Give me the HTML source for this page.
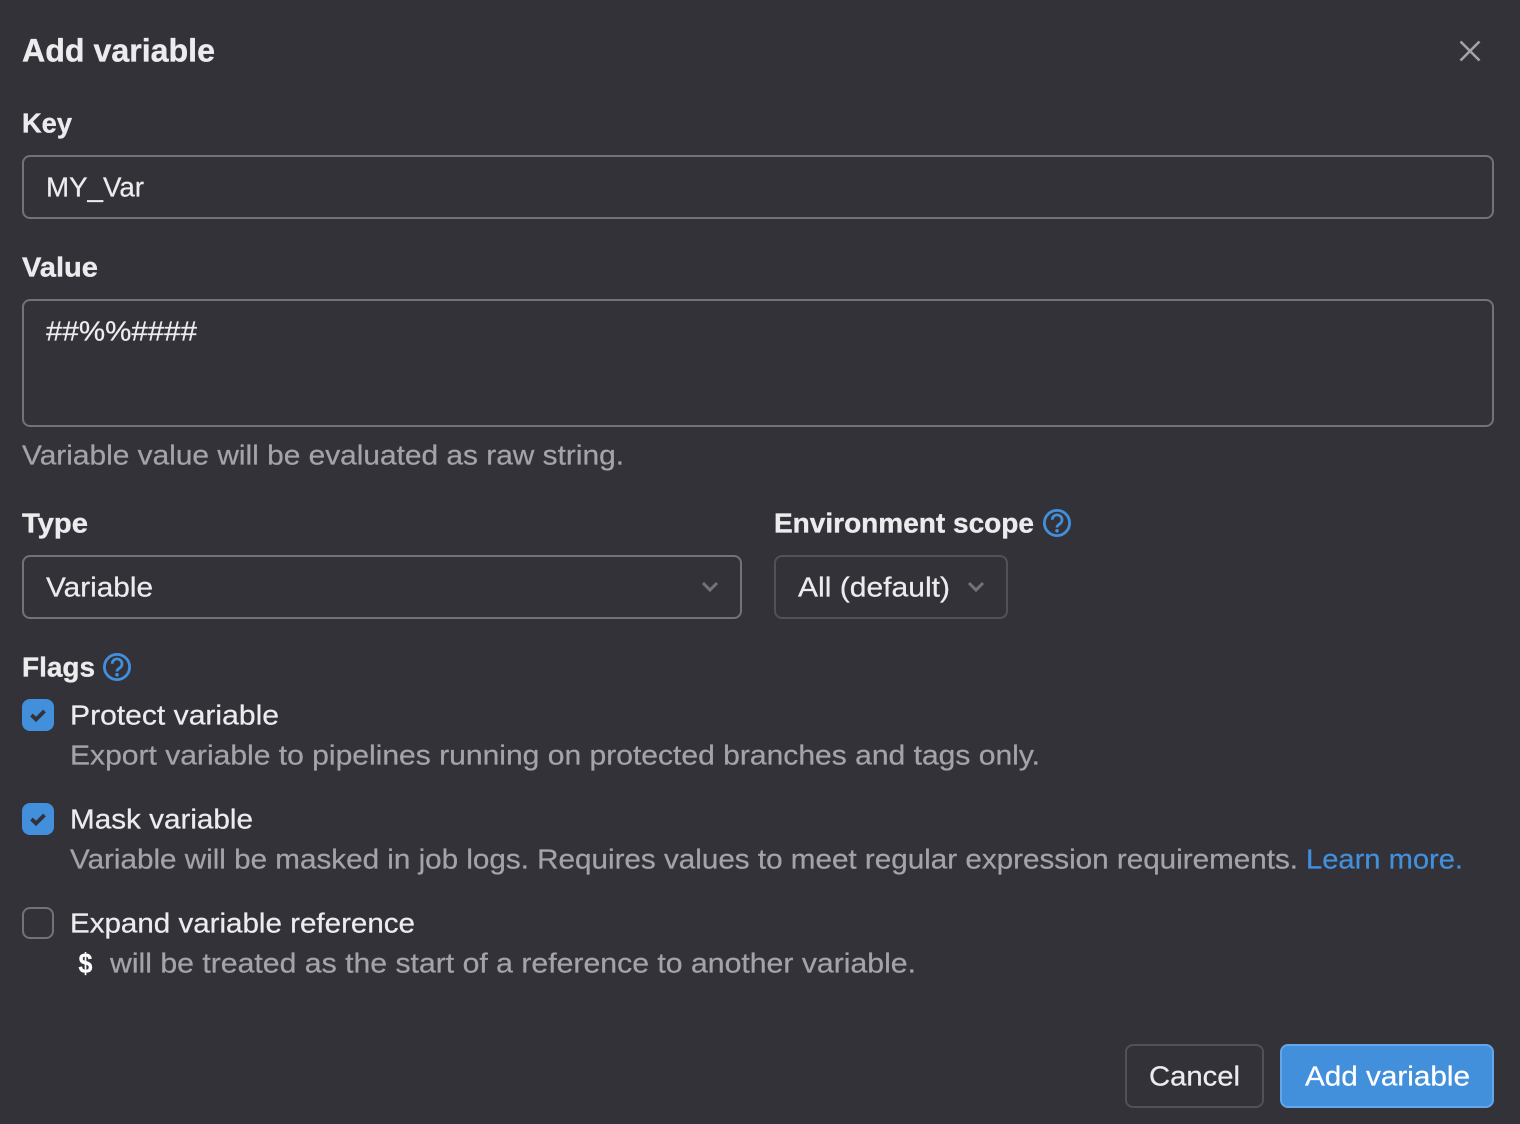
<!DOCTYPE html>
<html lang="en">
<head>
<meta charset="utf-8">
<title>Add variable</title>
<style>
html,body{margin:0;padding:0;background:#333238;width:1520px;height:1124px;overflow:hidden}
svg{display:block}
text{font-family:"Liberation Sans",sans-serif;font-size:28px;fill:#ececef;stroke:#ececef;stroke-width:.25px}
.b{font-weight:700;stroke-width:.35px}
.m{fill:#a4a3a8;stroke:#a4a3a8}
.box{fill:none;stroke:#737278;stroke-width:2}
.box2{fill:none;stroke:#535158;stroke-width:2}
.chev{fill:none;stroke:#737278;stroke-width:3}
.help{fill:none;stroke:#428fdc;stroke-width:2.8}
.chk{fill:none;stroke:#333238;stroke-width:3.8}
</style>
</head>
<body>
<svg width="1520" height="1124" viewBox="0 0 1520 1124" xmlns="http://www.w3.org/2000/svg">
<rect width="1520" height="1124" fill="#333238"/>

<text class="b" x="22" y="61.7" style="font-size:32px" textLength="193" lengthAdjust="spacingAndGlyphs">Add variable</text>
<path d="M1460.5 41.5L1479.5 60.5M1479.5 41.5L1460.5 60.5" fill="none" stroke="#a4a3a8" stroke-width="2.6"/>

<text class="b" x="22" y="132.6" textLength="50" lengthAdjust="spacingAndGlyphs">Key</text>
<rect class="box" x="23" y="156" width="1470" height="62" rx="7"/>
<text x="46" y="196.6" textLength="98" lengthAdjust="spacingAndGlyphs">MY_Var</text>

<text class="b" x="22" y="276.6" textLength="76" lengthAdjust="spacingAndGlyphs">Value</text>
<rect class="box" x="23" y="300" width="1470" height="126" rx="7"/>
<text x="46" y="340.6" textLength="151" lengthAdjust="spacingAndGlyphs">##%%####</text>
<text class="m" x="22" y="464.6" textLength="602" lengthAdjust="spacingAndGlyphs">Variable value will be evaluated as raw string.</text>

<text class="b" x="22" y="532.6" textLength="66" lengthAdjust="spacingAndGlyphs">Type</text>
<rect class="box" x="23" y="556" width="718" height="62" rx="7"/>
<text x="46" y="596.6" textLength="107" lengthAdjust="spacingAndGlyphs">Variable</text>
<path class="chev" d="M703 583L710 590L717 583"/>

<text class="b" x="774" y="532.6" textLength="260" lengthAdjust="spacingAndGlyphs">Environment scope</text>
<circle class="help" cx="1057" cy="523" r="12.6"/>
<path class="help" d="M1052.2 519.8a4.9 4.9 0 1 1 7.6 4.1c-1.7 1.1-2.8 1.9-2.8 3.6"/>
<circle cx="1057" cy="530.8" r="1.8" fill="#428fdc"/>
<rect class="box2" x="775" y="556" width="232" height="62" rx="7"/>
<text x="798" y="596.6" textLength="152" lengthAdjust="spacingAndGlyphs">All (default)</text>
<path class="chev" d="M969 583L976 590L983 583"/>

<text class="b" x="22" y="676.6" textLength="73" lengthAdjust="spacingAndGlyphs">Flags</text>
<circle class="help" cx="117" cy="667" r="12.6"/>
<path class="help" d="M112.2 663.8a4.9 4.9 0 1 1 7.6 4.1c-1.7 1.1-2.8 1.9-2.8 3.6"/>
<circle cx="117" cy="674.8" r="1.8" fill="#428fdc"/>

<rect x="22" y="699" width="32" height="32" rx="8" fill="#428fdc"/>
<path class="chk" d="M31.5 715L36 719.5L44.5 711"/>
<text x="70" y="724.6" textLength="209" lengthAdjust="spacingAndGlyphs">Protect variable</text>
<text class="m" x="70" y="764.6" textLength="970" lengthAdjust="spacingAndGlyphs">Export variable to pipelines running on protected branches and tags only.</text>

<rect x="22" y="803" width="32" height="32" rx="8" fill="#428fdc"/>
<path class="chk" d="M31.5 819L36 823.5L44.5 815"/>
<text x="70" y="828.6" textLength="183" lengthAdjust="spacingAndGlyphs">Mask variable</text>
<text class="m" x="70" y="868.6" textLength="1228" lengthAdjust="spacingAndGlyphs">Variable will be masked in job logs. Requires values to meet regular expression requirements.</text>
<text x="1306" y="868.6" style="fill:#428fdc;stroke:#428fdc" textLength="157" lengthAdjust="spacingAndGlyphs">Learn more.</text>

<rect class="box" x="23" y="908" width="30" height="30" rx="7"/>
<text x="70" y="932.6" textLength="345" lengthAdjust="spacingAndGlyphs">Expand variable reference</text>
<text x="78" y="972.6" style="font-family:'Liberation Mono',monospace;font-weight:700;fill:#fff;stroke:#fff" textLength="15" lengthAdjust="spacingAndGlyphs">$</text>
<text class="m" x="110" y="972.6" textLength="806" lengthAdjust="spacingAndGlyphs">will be treated as the start of a reference to another variable.</text>

<rect class="box2" x="1126" y="1045" width="137" height="62" rx="7"/>
<text x="1149" y="1085.6" textLength="91" lengthAdjust="spacingAndGlyphs">Cancel</text>
<rect x="1281" y="1045" width="212" height="62" rx="7" fill="#428fdc" stroke="#63a6e9" stroke-width="2"/>
<text x="1305" y="1085.6" style="fill:#fff;stroke:#fff" textLength="165" lengthAdjust="spacingAndGlyphs">Add variable</text>
</svg>
</body>
</html>
